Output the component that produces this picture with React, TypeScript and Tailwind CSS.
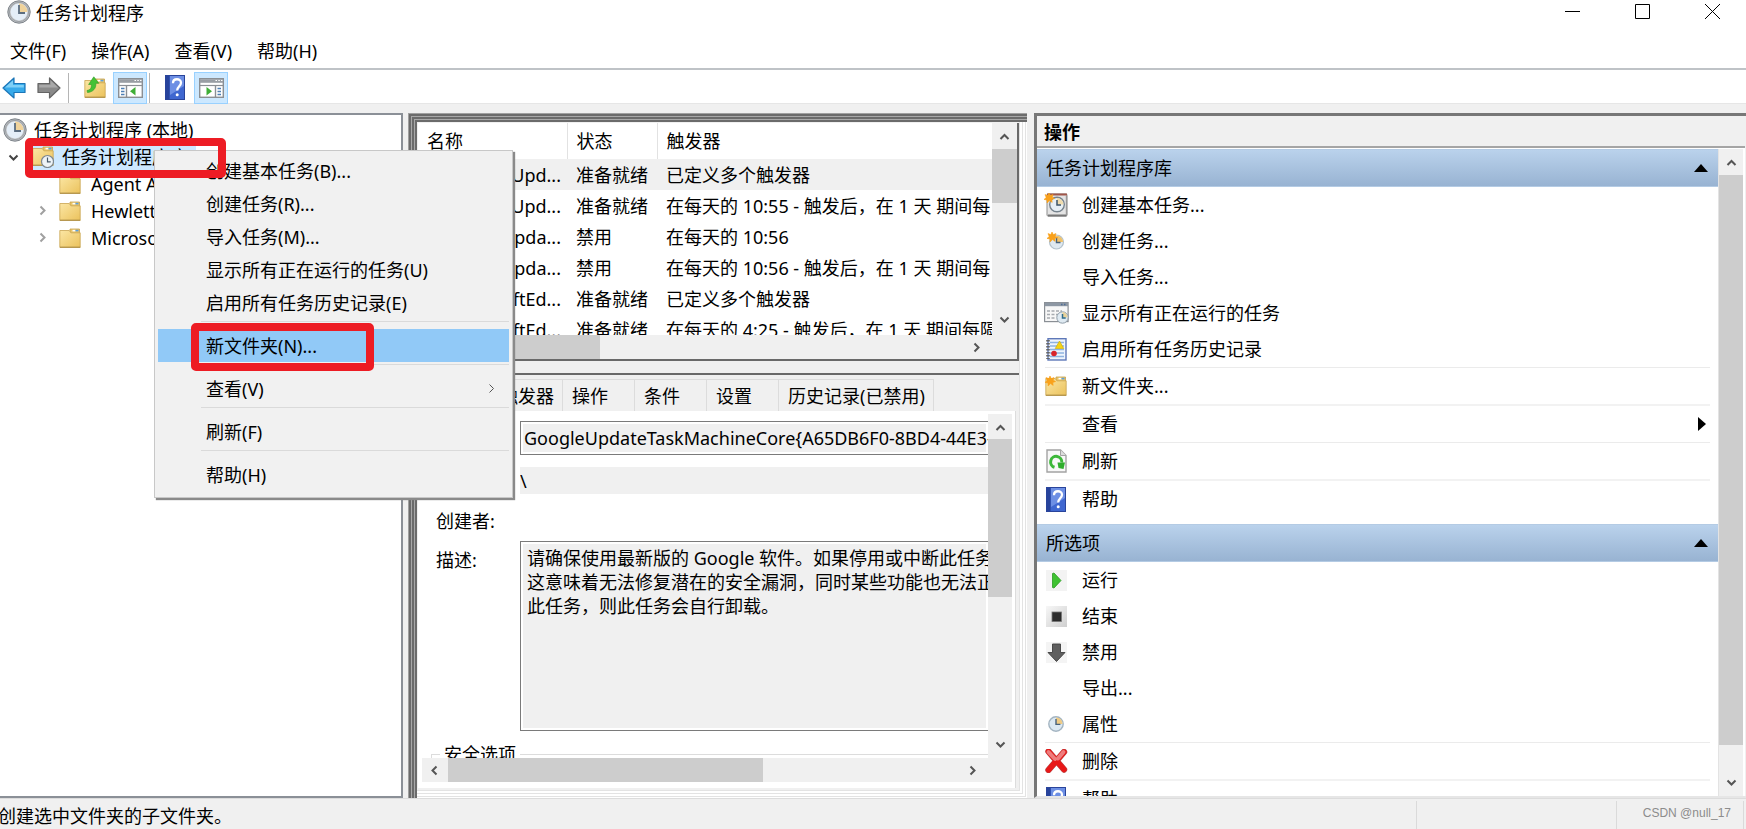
import React, { useState } from 'react';

interface IconProps {
  className?: string;
}

interface Task {
  name: string;
  status: string;
  trigger: string;
}

interface Action {
  label: string;
  icon?: React.ReactNode;
  submenu?: boolean;
  divider?: 'thin' | 'thick';
}

function ClockIcon({ className = 'w-6 h-6' }: IconProps) {
  return (
    <svg viewBox="0 0 24 24" className={className}>
      <circle cx="12" cy="12" r="11.2" fill="#b9bcc0" stroke="#7f858b" strokeWidth="1" />
      <circle cx="12" cy="12" r="9.6" fill="#c6c9cc" stroke="#93989d" strokeWidth="0.8" />
      <circle cx="12" cy="12" r="8.4" fill="#e4eef8" />
      <path d="M12 12V3.6A8.4 8.4 0 0 1 20.4 12Z" fill="#f0d39b" />
      <path d="M12 5v8h6" fill="none" stroke="#5b6d80" strokeWidth="1.8" />
    </svg>
  );
}

function SmallClock({ className = 'w-4 h-4' }: IconProps) {
  return (
    <svg viewBox="0 0 16 16" className={className}>
      <circle cx="8" cy="8" r="7.2" fill="#dbe8f2" stroke="#a3b4c1" strokeWidth="1.4" />
      <path d="M8 8V1.4A6.6 6.6 0 0 1 14.6 8Z" fill="#efcb85" />
      <path d="M8 3v5.4h4.4" fill="none" stroke="#47627c" strokeWidth="1.4" />
    </svg>
  );
}

function FolderShape() {
  return (
    <>
      <path d="M11 1h9.5v5H11z" fill="#e9c66b" stroke="#c9a14a" strokeWidth="0.8" />
      <path d="M13.5 2.6h3" stroke="#fff" strokeWidth="1.6" />
      <path d="M16.5 2.6h3" stroke="#5aa0e0" strokeWidth="1.6" />
      <path d="M0.8 2.5h9.5l1.6 2.3h9.3v14.6H0.8z" fill="url(#folder)" stroke="#c9a450" strokeWidth="0.8" />
      <path d="M1 19.2h20.2" stroke="#a98a45" strokeWidth="1" />
    </>
  );
}

function FolderIcon({ className = 'w-[22px] h-5' }: IconProps) {
  return (
    <svg viewBox="0 0 22 20" className={className}>
      <FolderShape />
    </svg>
  );
}

function TaskFolderIcon() {
  return (
    <svg viewBox="0 0 22 22" className="w-[22px] h-[22px]">
      <FolderShape />
      <circle cx="15.5" cy="15.5" r="6" fill="#eef3f6" stroke="#7c8791" strokeWidth="1.2" />
      <path d="M15.5 11.5v4.3h3.2" fill="none" stroke="#46596b" strokeWidth="1.2" />
    </svg>
  );
}

function Spark() {
  return (
    <path
      d="M5 0l1.3 2.6L9 1.6 8.2 4.2 10.6 5.6 7.8 6.4 8.2 9.4 5.6 7.6 3 10 3 7 0 6.4 2.2 4.6 1 1.6 3.8 2.6z"
      fill="#f9a11b"
      stroke="#f9a11b"
      strokeWidth="0.6"
    />
  );
}

function NewFolderIcon() {
  return (
    <svg viewBox="0 0 22 20" className="w-[22px] h-5">
      <FolderShape />
      <Spark />
    </svg>
  );
}

function FolderUpIcon() {
  return (
    <svg viewBox="0 0 22 23" className="w-[22px] h-[23px]">
      <g transform="translate(0 2)">
        <FolderShape />
      </g>
      <path d="M3 14.5c3.5-.6 4.6-2.6 4.4-6H4.6L9.8.8l5 6.500h-3c.6 5-2.800 8.800-8.300 9.200z" fill="#44c236" stroke="#2d9a25" strokeWidth="0.6" />
    </svg>
  );
}

function BasicTaskIcon() {
  return (
    <svg viewBox="0 0 24 24" className="w-6 h-6">
      <rect x="3" y="1" width="20" height="22" rx="1" fill="#e4e4e4" stroke="#8d8d8d" />
      <path d="M3 1.5h20" stroke="#a0564a" strokeWidth="2" />
      <path d="M4 22.5h18.5" stroke="#777" strokeWidth="2" />
      <path d="M22.5 3v19" stroke="#999" strokeWidth="1.4" />
      <circle cx="13" cy="11.5" r="7.3" fill="#e6eff5" stroke="#77838d" strokeWidth="1.4" />
      <path d="M13 11.5V5a6.5 6.5 0 0 1 6.5 6.5z" fill="#efdcae" />
      <path d="M13 7v5h4" fill="none" stroke="#3c5468" strokeWidth="1.5" />
      <Spark />
    </svg>
  );
}

function NewTaskIcon() {
  return (
    <svg viewBox="0 0 18 18" className="w-[18px] h-[18px]">
      <circle cx="9.5" cy="10" r="7" fill="#dfe9f0" stroke="#b4c2cc" strokeWidth="1.2" />
      <path d="M9.5 10V3.5A6.5 6.5 0 0 1 16 10z" fill="#f0c26a" />
      <path d="M9.5 5.5v5h4" fill="none" stroke="#47627c" strokeWidth="1.4" />
      <Spark />
    </svg>
  );
}

function RunningTasksIcon() {
  return (
    <svg viewBox="0 0 25 22" className="w-[25px] h-[22px] shrink-0">
      <rect x="0.6" y="0.6" width="23.5" height="19" fill="#f7f7f7" stroke="#8a8f95" strokeWidth="1.2" />
      <path d="M1 2.5h23" stroke="#8d97a3" strokeWidth="3.4" />
      <path d="M17 2.5h1.5M20 2.5h1.5" stroke="#4f6d96" strokeWidth="1.6" />
      <path d="M3 9h15M3 12.5h11M3 16h9" stroke="#a7abb0" strokeWidth="1.5" strokeDasharray="3 1.5" />
      <circle cx="18.5" cy="15.5" r="5.7" fill="#dfeaf2" stroke="#8d9ba7" />
      <path d="M18.5 15.5V10a5.5 5.5 0 0 1 5 5.5z" fill="#e8d29a" />
      <path d="M18.5 12v4h3.2" fill="none" stroke="#2f6c8c" strokeWidth="1.5" />
    </svg>
  );
}

function HistoryIcon() {
  return (
    <svg viewBox="0 0 22 23" className="w-[22px] h-[23px]">
      <rect x="3" y="0.7" width="18" height="21.3" fill="#eef4fc" stroke="#5e78b8" strokeWidth="1.4" />
      <path d="M5 4.5h14M5 8h14M5 11.5h14M5 15h14M5 18.5h14" stroke="#8fb3e0" strokeWidth="1.3" />
      <path d="M14.5 3l4.3 7.5h-8.6z" fill="#f5d313" stroke="#c9a800" strokeWidth="0.6" />
      <circle cx="9" cy="15.5" r="2.8" fill="#d8232a" />
      <path d="M3 2v19" stroke="#666" strokeWidth="3.6" strokeDasharray="1.5 1.5" />
    </svg>
  );
}

function RefreshIcon() {
  return (
    <svg viewBox="0 0 21 24" className="w-[21px] h-6">
      <path d="M1 1h13.5l5.5 5.5V23H1z" fill="#f8f8f8" stroke="#a3a3a3" strokeWidth="1.4" />
      <path d="M14.5 1v5.5H20" fill="#ddd" stroke="#a3a3a3" />
      <path d="M8.5 18.3A5.6 5.6 0 1 1 15.8 13.5" fill="none" stroke="#3db83a" strokeWidth="3" />
      <path d="M11.5 13.5h7.5l-1.5 6.5-5-1z" fill="#2fae2c" />
    </svg>
  );
}

function HelpIcon() {
  return (
    <svg viewBox="0 0 20 25" className="w-5 h-[25px]">
      <rect x="0.5" y="0.5" width="19" height="24" fill="#3f67d0" stroke="#29449b" />
      <rect x="1" y="1" width="3.6" height="23" fill="#27439c" />
      <path d="M5 1h14v10L5 20z" fill="#6d8fe4" />
      <path d="M8 8.2c0-5.4 8-5 8-.4 0 3.4-3.8 3.6-3.8 7.6" fill="none" stroke="#fff" strokeWidth="2.3" />
      <circle cx="12.2" cy="19.7" r="1.5" fill="#fff" />
    </svg>
  );
}

function BackIcon() {
  return (
    <svg viewBox="0 0 24 22" className="w-6 h-[22px]">
      <path d="M1 11L12 1v5.5h11v9H12V21z" fill="#37aaea" stroke="#1b76b8" strokeWidth="1.2" strokeLinejoin="round" />
      <path d="M3 10.5L11 3.2V8h10.8v2.5z" fill="#7fd0f7" />
    </svg>
  );
}

function ForwardIcon() {
  return (
    <svg viewBox="0 0 24 22" className="w-6 h-[22px]">
      <path d="M23 11L12.5 1v5.5H1v9h11.5V21z" fill="#8a8a8a" stroke="#646464" strokeWidth="1.2" strokeLinejoin="round" />
      <path d="M21 10.5L13.5 3.2V8H2.2v2.5z" fill="#a9a9a9" />
    </svg>
  );
}

function PaneIcon({ flip }: { flip?: boolean }) {
  return (
    <svg viewBox="0 0 25 20" className="w-[25px] h-5">
      <rect x="0.7" y="0.7" width="23.6" height="18.6" fill="#fff" stroke="#8b8f94" strokeWidth="1.4" />
      <path d="M1 3h23" stroke="#999ea4" strokeWidth="3.6" />
      <path d="M16.5 2.5H18M19.3 2.5h1.5M22 2.5h1.5" stroke="#fff" strokeWidth="1.2" />
      <path d="M1 7.5h23" stroke="#8b8f94" strokeWidth="1.2" />
      <g transform={flip ? 'translate(25 0) scale(-1 1)' : undefined}>
        <path d="M8.5 8v11" stroke="#8b8f94" strokeWidth="1.4" />
        <path d="M3 10.5h3.5M3 13.5h3.5M3 16.5h3.5" stroke="#4e7fb5" strokeWidth="1.3" />
        <path d="M17.5 9v8.5L12 13.3z" fill="#3fae37" />
      </g>
    </svg>
  );
}

function RunIcon() {
  return (
    <svg viewBox="0 0 21 21" className="w-[21px] h-[21px]">
      <rect width="21" height="21" fill="#f3f3f3" />
      <path d="M6.5 3.5v14l1.5.5 7-7.5L8 3z" fill="#3fc232" stroke="#2b9a22" strokeWidth="0.8" />
    </svg>
  );
}

function EndIcon() {
  return (
    <svg viewBox="0 0 21 21" className="w-[21px] h-[21px]">
      <rect width="21" height="21" fill="url(#stop)" />
      <rect x="6" y="6" width="9.5" height="9.5" fill="#2c2c2c" stroke="#777" strokeWidth="0.8" />
    </svg>
  );
}

function DisableIcon() {
  return (
    <svg viewBox="0 0 21 21" className="w-[21px] h-[21px]">
      <rect width="21" height="21" fill="#f4f4f4" />
      <path d="M6.5 2h8v8.500h4.500L10.500 19.500 2 10.500h4.500z" fill="#5f5f5f" stroke="#3f3f3f" strokeWidth="0.9" strokeLinejoin="round" />
    </svg>
  );
}

function DeleteIcon() {
  return (
    <svg viewBox="0 0 24 24" className="w-6 h-6">
      <path d="M4.500 2.500L20 20.500M20 3L4.500 21" stroke="#b84a4a" strokeWidth="6.400" strokeLinecap="round" />
      <path d="M4.500 2.500L20 20.500M20 3L4.500 21" stroke="#e81818" strokeWidth="5.200" strokeLinecap="round" />
      <path d="M4.500 3L11 10M19.500 3L14 9.500" stroke="#ee7d7d" strokeWidth="4" strokeLinecap="round" />
    </svg>
  );
}

type Direction = 'up' | 'down' | 'left' | 'right';

const chevrons: Record<Direction, string> = {
  up: 'M1.5 8L5.5 4l4 4',
  down: 'M1.5 3.5l4 4 4-4',
  left: 'M7.5 1.5l-4 4 4 4',
  right: 'M3.5 1.5l4 4-4 4'
};

function Chevron({ dir, color = '#555', width = 2 }: { dir: Direction; color?: string; width?: number }) {
  return (
    <svg viewBox="0 0 11 11" className="w-[11px] h-[11px] shrink-0">
      <path d={chevrons[dir]} fill="none" stroke={color} strokeWidth={width} />
    </svg>
  );
}

function Gradients() {
  return (
    <svg className="absolute w-0 h-0">
      <defs>
        <linearGradient id="folder" x1="0" y1="0" x2="1" y2="1">
          <stop offset="0" stopColor="#fbe6a4" />
          <stop offset="1" stopColor="#ebc25c" />
        </linearGradient>
        <linearGradient id="stop" x1="0" y1="0" x2="1" y2="1">
          <stop offset="0" stopColor="#f7f7f7" />
          <stop offset="1" stopColor="#cfcfcf" />
        </linearGradient>
      </defs>
    </svg>
  );
}

const tasks: Task[] = [
  { name: 'GoogleUpd...', status: '准备就绪', trigger: '已定义多个触发器' },
  { name: 'GoogleUpd...', status: '准备就绪', trigger: '在每天的 10:55 - 触发后，在 1 天 期间每' },
  { name: 'klcp_upda...', status: '禁用', trigger: '在每天的 10:56' },
  { name: 'klcp_upda...', status: '禁用', trigger: '在每天的 10:56 - 触发后，在 1 天 期间每' },
  { name: 'MicrosoftEd...', status: '准备就绪', trigger: '已定义多个触发器' },
  { name: 'MicrosoftEd...', status: '准备就绪', trigger: '在每天的 4:25 - 触发后，在 1 天 期间每隔' }
];

const libraryActions: Action[] = [
  { label: '创建基本任务...', icon: <BasicTaskIcon /> },
  { label: '创建任务...', icon: <NewTaskIcon /> },
  { label: '导入任务...' },
  { label: '显示所有正在运行的任务', icon: <RunningTasksIcon /> },
  { label: '启用所有任务历史记录', icon: <HistoryIcon /> },
  { label: '新文件夹...', icon: <NewFolderIcon />, divider: 'thin' },
  { label: '查看', submenu: true, divider: 'thick' },
  { label: '刷新', icon: <RefreshIcon />, divider: 'thin' },
  { label: '帮助', icon: <HelpIcon />, divider: 'thick' }
];

const selectedActions: Action[] = [
  { label: '运行', icon: <RunIcon /> },
  { label: '结束', icon: <EndIcon /> },
  { label: '禁用', icon: <DisableIcon /> },
  { label: '导出...' },
  { label: '属性', icon: <SmallClock /> },
  { label: '删除', icon: <DeleteIcon />, divider: 'thin' },
  { label: '帮助', icon: <HelpIcon />, divider: 'thick' }
];

const menuGroups: string[][] = [
  ['创建基本任务(B)...', '创建任务(R)...', '导入任务(M)...', '显示所有正在运行的任务(U)', '启用所有任务历史记录(E)'],
  ['新文件夹(N)...'],
  ['查看(V)'],
  ['刷新(F)'],
  ['帮助(H)']
];

const tabs = ['常规', '触发器', '操作', '条件', '设置', '历史记录(已禁用)'];

const description = `请确保使用最新版的 Google 软件。如果停用或中断此任务
这意味着无法修复潜在的安全漏洞，同时某些功能也无法正
此任务，则此任务会自行卸载。`;

function ActionSection({ title, actions }: { title: string; actions: Action[] }) {
  const [open, setOpen] = useState(true);

  return (
    <section>
      <button
        onClick={() => setOpen(!open)}
        className="flex items-center justify-between w-full h-[38px] pl-[9px] pr-2.5 bg-linear-to-b from-[#bad2ec] to-[#98b3d2] border-y border-[#b4cbe4]"
      >
        {title}
        <svg viewBox="0 0 14 8" className="w-3.5 h-2">
          <path d="M7 0l7 8H0z" fill="#000" />
        </svg>
      </button>
      {open && (
        <ul>
          {actions.map((action, index) => (
            <li key={index}>
              {action.divider && (
                <div className={action.divider === 'thin' ? 'h-px mx-2 bg-[#ebebeb]' : 'h-0.5 mx-2 bg-[#f2f2f2]'} />
              )}
              <button className="flex items-center w-full h-9 pl-[7px] pr-3 text-left">
                <span className="flex justify-center w-6 mr-3.5 shrink-0">{action.icon}</span>
                {action.label}
                {action.submenu && (
                  <svg viewBox="0 0 8 14" className="w-2 h-3.5 ml-auto">
                    <path d="M0 0l8 7-8 7z" fill="#000" />
                  </svg>
                )}
              </button>
            </li>
          ))}
        </ul>
      )}
    </section>
  );
}

function ContextMenu() {
  return (
    <div
      role="menu"
      className="absolute left-[154px] top-[150px] z-10 w-[359px] pt-[3px] pb-1.5 px-[3px] bg-[#f1f1f1] border border-[#c8c8c8] shadow-[2px_2px_1px_#8a8a8a]"
    >
      {menuGroups.map((group, g) => (
        <div key={g} role="group">
          {g > 0 && <div className="h-px mt-0.5 mb-[7px] ml-[43px] bg-[#dadada]" />}
          {group.map((label) => (
            <button
              key={label}
              role="menuitem"
              className={`relative flex items-center w-full h-[33px] pl-12 pr-3 text-left ${g === 1 ? 'bg-[#91c9f7]' : ''}`}
            >
              {label}
              {g === 2 && (
                <span className="ml-auto">
                  <Chevron dir="right" width={1} />
                </span>
              )}
              {g === 1 && (
                <span className="absolute left-[33px] -top-1.5 w-[183px] h-12 border-8 border-[#ed1c24] rounded-[5px]" />
              )}
            </button>
          ))}
        </div>
      ))}
    </div>
  );
}

function TreePanel() {
  return (
    <nav className="w-[403px] shrink-0 border-t-2 border-r-2 border-b-2 border-[#8b9097] bg-white leading-6">
      <div className="flex items-center h-[29px] gap-[7px] pl-[3px]">
        <ClockIcon />
        任务计划程序 (本地)
      </div>
      <div className="relative flex items-center h-[26px] pl-2">
        <Chevron dir="down" color="#444" />
        <span className="flex items-center h-[26px] ml-[13px] pr-2 gap-2 bg-[#cde8ff]">
          <TaskFolderIcon />
          任务计划程序库
        </span>
        <span className="absolute left-[25px] -top-1.5 z-20 w-[201px] h-10 border-8 border-[#ed1c24] rounded-[5px]" />
      </div>
      {['Agent Activation', 'Hewlett-Packard', 'Microsoft'].map((name, index) => (
        <div key={name} className="flex items-center h-[27px] pl-[37px]">
          <span className="w-[22px]">{index > 0 && <Chevron dir="right" color="#a0a0a0" />}</span>
          <FolderIcon />
          <span className="ml-[10px]">{name}</span>
        </div>
      ))}
    </nav>
  );
}

function TaskList() {
  return (
    <div className="flex flex-col h-[238px] shrink-0 border-r-2 border-b-2 border-[#696969] bg-white">
      <div className="flex flex-1 min-h-0">
        <div className="flex-1 min-w-0 overflow-hidden">
          <table className="w-full table-fixed whitespace-nowrap">
            <thead>
              <tr className="h-9 text-left">
                <th className="w-[149px] pl-[9px] font-normal border-r border-[#e2e2e2]">名称</th>
                <th className="w-[90px] pl-[9px] font-normal border-r border-[#e2e2e2]">状态</th>
                <th className="pl-[9px] font-normal">触发器</th>
              </tr>
            </thead>
            <tbody>
              {tasks.map((task, index) => (
                <tr key={index} className={index === 0 ? 'h-[31px] bg-[#f0f0f0]' : 'h-[31px]'}>
                  <td className="pr-1.5 text-right">{task.name}</td>
                  <td className="pl-[9px]">{task.status}</td>
                  <td className="pl-[9px]">{task.trigger}</td>
                </tr>
              ))}
            </tbody>
          </table>
        </div>
        <div className="flex flex-col items-center w-[25px] bg-[#f0f0f0] pt-2 pb-2.5">
          <Chevron dir="up" />
          <div className="w-full h-[54px] mt-[7px] bg-[#cdcdcd]" />
          <span className="mt-auto">
            <Chevron dir="down" />
          </span>
        </div>
      </div>
      <div className="flex items-center h-6 pl-6 pr-[35px] bg-[#f0f0f0]">
        <div className="w-[158px] h-full bg-[#cdcdcd]" />
        <span className="ml-auto">
          <Chevron dir="right" />
        </span>
      </div>
    </div>
  );
}

function TaskDetails() {
  const [active, setActive] = useState('常规');

  return (
    <div className="flex flex-col flex-1 min-h-0 mt-3 border-t-2 border-[#696969]">
      <div role="tablist" className="flex h-9 pt-1 pl-px">
        {tabs.map((tab) => (
          <button
            key={tab}
            role="tab"
            aria-selected={tab === active}
            onClick={() => setActive(tab)}
            className="min-w-[72px] pl-[9px] pr-2 text-left whitespace-nowrap border-t border-r border-[#dcdcdc]"
          >
            {tab}
          </button>
        ))}
      </div>
      <div className="flex flex-col flex-1 min-h-0 mr-[3px] pl-1 pr-[3px] pt-[3px] pb-1.5 bg-white border-r border-[#dcdcdc]">
        <div className="flex flex-1 min-h-0">
          <div className="flex-1 min-w-0 overflow-hidden pl-3.5 pt-[7px]">
            <div className="flex items-center h-[34px]">
              <label htmlFor="name" className="w-[84px] shrink-0">名称:</label>
              <input
                id="name"
                readOnly
                value="GoogleUpdateTaskMachineCore{A65DB6F0-8BD4-44E3-"
                className="flex-1 min-w-0 h-[34px] pl-[3px] bg-[#f0f0f0] border border-r-0 border-[#7a7a7a] shadow-[inset_0_0_0_2px_#fff]"
              />
            </div>
            <div className="flex items-center h-[27px] mt-3">
              <label htmlFor="location" className="w-[84px] shrink-0">位置:</label>
              <input id="location" readOnly value="\" className="flex-1 min-w-0 h-[27px] bg-[#f0f0f0]" />
            </div>
            <div className="mt-[15px]">创建者:</div>
            <div className="flex mt-2">
              <label htmlFor="description" className="w-[84px] shrink-0 pt-[7px]">描述:</label>
              <textarea
                id="description"
                readOnly
                value={description}
                className="flex-1 min-w-0 h-[190px] pt-1 pl-1.5 resize-none overflow-hidden whitespace-pre leading-6 bg-[#f0f0f0] border border-r-0 border-[#7a7a7a] shadow-[inset_0_0_0_2px_#fff]"
              />
            </div>
            <fieldset className="h-10 mt-[11px] -ml-[5px] pl-2 border-t border-l border-[#dcdcdc]">
              <legend className="px-1">安全选项</legend>
            </fieldset>
          </div>
          <div className="flex flex-col items-center w-6 bg-[#f0f0f0] pt-2 pb-2">
            <Chevron dir="up" />
            <div className="w-full h-[158px] mt-1.5 bg-[#cdcdcd]" />
            <span className="mt-auto">
              <Chevron dir="down" />
            </span>
          </div>
        </div>
        <div className="flex items-center h-6 pl-[7px] pr-[34px] bg-[#f0f0f0]">
          <Chevron dir="left" />
          <div className="w-[315px] h-full ml-2 bg-[#cdcdcd]" />
          <span className="ml-auto">
            <Chevron dir="right" />
          </span>
        </div>
      </div>
    </div>
  );
}

function ActionsPane() {
  return (
    <aside className="flex flex-col w-[712px] shrink-0 pr-px border-t-[3px] border-l-[3px] border-b-2 border-t-[#777] border-l-[#777] border-b-[#e6e6e6] bg-[#f0f0f0]">
      <h2 className="flex items-center h-8 pt-0.5 pl-[7px] shrink-0 font-bold border-b-2 border-[#a5a5a5]">操作</h2>
      <div className="flex flex-1 min-h-0 pt-px bg-white">
        <div className="flex-1 min-w-0 overflow-hidden">
          <ActionSection title="任务计划程序库" actions={libraryActions} />
          <div className="h-[7px]" />
          <ActionSection title="所选项" actions={selectedActions} />
        </div>
        <div className="flex flex-col items-center w-[25px] mr-0.5 pt-2 pb-2 bg-[#f0f0f0] border-l border-[#e3e3e3]">
          <Chevron dir="up" />
          <div className="flex-1 w-full mt-[7px] mb-8 bg-[#cdcdcd]" />
          <Chevron dir="down" />
        </div>
      </div>
    </aside>
  );
}

export default function App() {
  return (
    <div className="relative flex flex-col h-screen overflow-hidden bg-[#f0f0f0] text-black text-[18px] leading-6 font-['Noto_Sans','Noto_Sans_CJK_SC',sans-serif]">
      <Gradients />
      <header className="flex items-start justify-between h-[34px] pl-[7px] pr-[25px] bg-white">
        <h1 className="flex items-center gap-[5px] leading-[22px] font-['Noto_Sans_CJK_SC',sans-serif]">
          <ClockIcon />
          任务计划程序
        </h1>
        <div className="flex gap-[54px] pt-1">
          <button aria-label="最小化">
            <svg viewBox="0 0 16 16" className="w-4 h-4">
              <path d="M0 7.5h15" stroke="#000" />
            </svg>
          </button>
          <button aria-label="最大化">
            <svg viewBox="0 0 16 16" className="w-4 h-4">
              <path d="M.5.5h14v14H.5z" fill="none" stroke="#000" />
            </svg>
          </button>
          <button aria-label="关闭">
            <svg viewBox="0 0 16 16" className="w-4 h-4">
              <path d="M0 0l15 15M15 0L0 15" stroke="#000" />
            </svg>
          </button>
        </div>
      </header>

      <nav className="flex items-center h-9 pl-2.5 gap-[25px] bg-white border-b-2 border-[#bfc3c7]">
        <button>文件(F)</button>
        <button>操作(A)</button>
        <button>查看(V)</button>
        <button>帮助(H)</button>
      </nav>

      <div className="flex items-center h-[34px] pt-0.5 pl-0.5 bg-white border-b border-[#e6e6e6]">
        <button aria-label="后退"><BackIcon /></button>
        <button aria-label="前进" className="ml-[11px]"><ForwardIcon /></button>
        <div className="w-px h-[30px] ml-[7px] mr-[15px] bg-[#b5b5b5]" />
        <button aria-label="向上"><FolderUpIcon /></button>
        <button aria-label="控制台树" className="flex items-center justify-center w-[34px] h-8 ml-[7px] bg-[#cce8ff] border border-[#99d1ff]">
          <PaneIcon />
        </button>
        <div className="w-px h-[30px] ml-0.5 mr-[15px] bg-[#b5b5b5]" />
        <button aria-label="帮助"><HelpIcon /></button>
        <button aria-label="操作窗格" className="flex items-center justify-center w-[34px] h-8 ml-[9px] bg-[#cce8ff] border border-[#99d1ff]">
          <PaneIcon flip />
        </button>
      </div>

      <main className="flex flex-1 min-h-0 mt-[9px]">
        <TreePanel />
        <div className="flex flex-col flex-1 min-w-0 ml-[5px] mr-[7px] pl-2.5 pt-2.5 pr-2 pb-2.5 shadow-[inset_1px_1px_#a0a0a0,inset_3px_3px_#6b6b6b,inset_4px_4px_#a8a8a8,inset_6px_6px_#6b6b6b,inset_7px_7px_#a8a8a8,inset_9px_9px_#6b6b6b,inset_-1px_-1px_#fff,inset_-2px_-2px_#e3e3e3,inset_-4px_-4px_#fff,inset_-5px_-5px_#e3e3e3,inset_-7px_-7px_#fff,inset_-8px_-8px_#e3e3e3]">
          <TaskList />
          <TaskDetails />
        </div>
        <ActionsPane />
      </main>

      <footer className="flex h-[31px] shrink-0 pr-0.5 border-t border-[#dcdcdc]">
        <span className="flex-1 pt-[5px] -ml-0.5">创建选中文件夹的子文件夹。</span>
        <span className="w-[200px] mt-0.5 border-l border-[#dadada]" />
        <span className="w-[128px] pr-3 mt-0.5 text-right text-xs leading-6 text-[#8c8c8c] border-x border-[#dadada] font-['Liberation_Sans',sans-serif]">
          CSDN @null_17
        </span>
      </footer>

      <ContextMenu />
    </div>
  );
}
